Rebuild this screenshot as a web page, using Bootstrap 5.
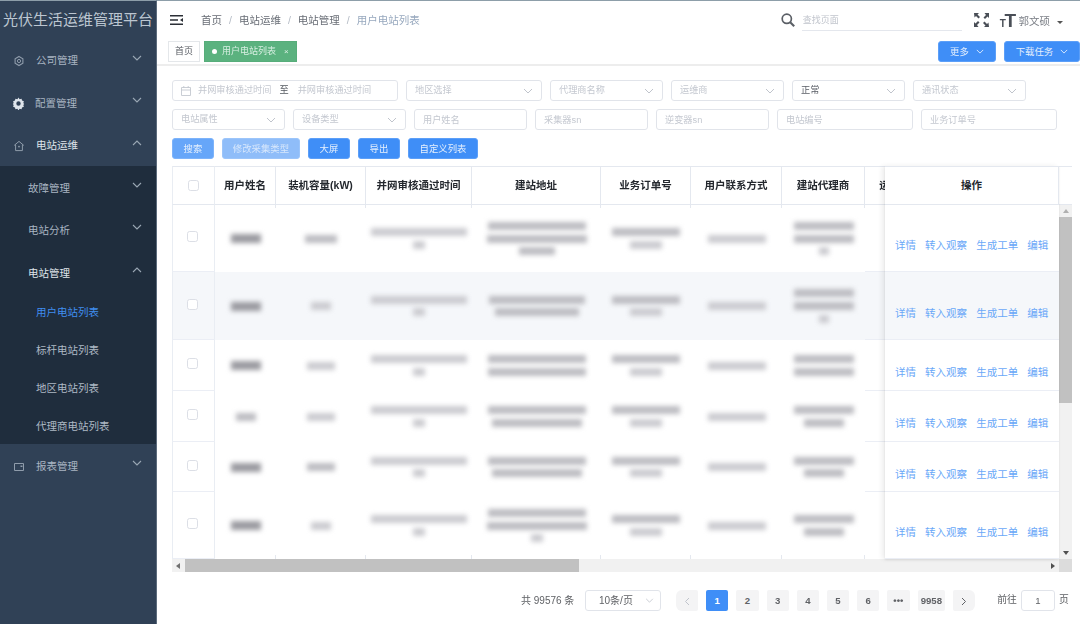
<!DOCTYPE html>
<html lang="zh-CN">
<head>
<meta charset="utf-8">
<title>光伏生活运维管理平台</title>
<link href="https://cdn.jsdelivr.net/npm/bootstrap@5.3.0/dist/css/bootstrap.min.css" rel="stylesheet">
<style>
html,body{height:100%;margin:0;overflow:hidden;background:#fff}
body{font-family:"Liberation Sans","Noto Sans CJK SC",sans-serif;font-size:10.5px;color:#606266}
.app-frame{height:624px;filter:blur(.35px)}
/* sidebar */
.side-rail{width:157px;flex:none;background:#304156;border-right:1px solid #5c6b7c;border-top:1px solid #8d9ea9;color:#aab6c3;overflow:hidden}
.side-title{height:38px;font-size:15px;line-height:38px;padding-left:3px;color:#bcc6d1;white-space:nowrap;letter-spacing:0}
.side-item{height:42.3px;display:flex;align-items:center;font-size:10.5px;position:relative;padding-top:2px;color:#a9b5c2}
.side-item.lvl1{padding-left:13px}
.side-item.lvl2{padding-left:28px;padding-top:4px}
.side-item.lvl3{padding-left:36px;height:37.8px;padding-top:3px;color:#aeb9c5}
.side-item.tail{padding-top:4px}
.side-item.on{color:#dfe4ea}
.side-item.cur{color:#3f8ef0}
.side-sub{background:#1f2d3d}
.side-ico{width:12px;height:12px;margin-right:11px;flex:none;color:#8f9cab}
.side-ico.big{margin-right:10px;margin-left:-1px;width:13px;height:13px;color:#dfe5ec}
.side-chev{position:absolute;left:132px;top:50%;margin-top:-5px;width:10px;height:6px;color:#9aa7b4}
/* header */
.top-strip{height:39px;border-top:1px solid #8d9ea9;padding-left:13px;padding-right:17px}
.burger{width:13px;height:10px;color:#2b2f36;margin-right:18px}
.crumbs{--bs-breadcrumb-margin-bottom:0;--bs-breadcrumb-item-padding-x:7px;--bs-breadcrumb-divider-color:#b4bbc5;font-size:10.5px;padding-top:1px}
.crumbs .breadcrumb-item{color:#686d75}
.crumbs .breadcrumb-item.active{color:#97a8be}
.find-ico{width:14px;height:14px;color:#5b5f66;margin-right:7px}
.find-box{width:160px;height:22px;border:0;border-bottom:1px solid #e4e7ed;border-radius:0;font-size:9px;padding:0 1px;margin-right:12px;color:#606266}
.find-box::placeholder{color:#c0c4cc}
.expand-ico{width:15px;height:14px;color:#4a4f57;margin-right:11px}
.size-ico{font-weight:700;color:#4a4f57;font-size:19px;line-height:1;margin-right:4px;white-space:nowrap;font-family:"Liberation Sans",sans-serif;letter-spacing:-1.500px}
.size-ico span{font-size:10px}
.who{font-size:10.5px;color:#7a7e85;margin-top:4px}
.who-caret{border:3px solid transparent;border-top:3.5px solid #555;border-bottom:0;margin-left:7px;margin-top:5px}
/* tag bar */
.tag-strip{height:27px;border-bottom:2px solid #ededed;padding-left:11px;padding-bottom:1px}
.tab-plain,.tab-live{height:21px;line-height:19px;font-size:9px;border:1px solid #e4e7ea;padding:0 6px;color:#54585f;background:#fff}
.tab-live{background:#5bb27f;border-color:#57ad7a;color:#d8efe2;margin-left:4px;padding:0 7px;display:flex;align-items:center}
.tab-dot{width:5px;height:5px;border-radius:50%;background:#fff;margin-right:5px}
.tab-x{font-size:8px;margin-left:8px}
.btn.act{--bs-btn-bg:#3f8ef7;--bs-btn-border-color:#5c9ff8;--bs-btn-color:#e6f0fd;--bs-btn-padding-x:0;--bs-btn-padding-y:0;--bs-btn-border-radius:3px;--bs-btn-font-size:9.4px;height:21px;line-height:19px}
.btn.act.faded{--bs-btn-bg:#66a6f9;--bs-btn-border-color:#7db3fa}
.btn.act.off{--bs-btn-disabled-bg:#8fbdf9;--bs-btn-disabled-border-color:#9cc5fa;--bs-btn-disabled-color:#d7e7fc;--bs-btn-disabled-opacity:1;background:#8fbdf9;border-color:#9cc5fa;color:#d7e7fc;opacity:1}
.w42{width:42px}.w58{width:58px}.w70{width:70px}.w76{width:76px}.w78{width:78px}
.btn-chev{width:8px;height:5px;margin-left:7px;vertical-align:1px}
/* filters */
.filter-zone{padding:14px 0 0 15px}
.f-row{margin-bottom:8px}
.fld{height:21px;min-height:21px;border:1px solid #e1e4ea;border-radius:3px;font-size:9.2px;padding:0 0 0 8px;color:#606266;box-shadow:none;background-color:#fff}
.fld::placeholder{color:#c4c8d0}
select.fld{background-image:url("data:image/svg+xml,%3csvg xmlns='http://www.w3.org/2000/svg' viewBox='0 0 10 6'%3e%3cpath fill='none' stroke='%23c0c4cc' d='M1 1l4 4 4-4'/%3e%3c/svg%3e");background-size:10px 6px;background-position:right 8px center;color:#c4c8d0}
select.fld.chosen{color:#5a5e66}
.w113{width:113px}.w136{width:136px}.w226{width:226px}
.date-fld{display:flex;align-items:center;color:#c4c8d0}
.date-fld svg{width:10px;height:10px;margin-right:7px;color:#c4c8d0}
.date-fld b{font-weight:400;color:#54585f;margin:0 9px 0 8px}
/* data table */
.grid-shell{position:relative;width:900px;margin:7px 0 0 15px;display:grid;grid-template-columns:887px 13px;grid-template-rows:393px 13px}
.grid-clip{overflow:hidden;position:relative}
.grid-tbl{--bs-table-border-color:#ebeef5;border-collapse:separate;border-spacing:0;table-layout:fixed;width:887px;margin:0;font-size:10.5px}
.cw43{width:43px}.cw61{width:61px}.cw90{width:90px}.cw106{width:106px}.cw129{width:129px}.cw91{width:91px}.cw83{width:83px}.cw133{width:133px}
.grid-tbl th{height:39px;padding:0;vertical-align:middle;text-align:center;font-weight:700;color:#24282e;border-top:1px solid #e4e8ef;border-bottom:1px solid #e4e8ef;border-right:1px solid #e4e8ef;white-space:nowrap;overflow:hidden;position:relative;background:#fff}
.grid-tbl td{padding:0;vertical-align:middle;text-align:center;border:0;background:#fff}
.grid-tbl .lead-cell{border-left:1px solid #e9edf3;border-right:1px solid #e9edf3;border-bottom:1px solid #ebeef5}
.grid-tbl th.lead-cell{border-top:1px solid #e4e8ef;border-bottom:1px solid #e4e8ef}
.grid-tbl .trail-cell{border-bottom:1px solid #ebeef5}
.grid-tbl tr.hov td{background:#f5f7fa}
.grid-tbl tr.h67 td{height:67px}
.grid-tbl tr.h68 td{height:68px}
.grid-tbl tr.h51 td{height:51px}
.grid-tbl tr.h50 td{height:50px}
.grid-tbl tr.tick td:not(.lead-cell):not(.trail-cell),.grid-tbl tr.tick-a td.mid{position:relative}
.grid-tbl tr.tick td:not(.lead-cell):not(.trail-cell)::after{content:"";position:absolute;right:0;bottom:0;width:1px;height:4px;background:#e4e8ef}
.grid-tbl tr.tick-a td.mid::after{content:"";position:absolute;right:0;top:0;width:1px;height:3px;background:#e4e8ef}
.ck{width:11px;height:11px;margin:-3px 0 0;border:1px solid #dcdfe6;border-radius:2px;background-color:#fff;float:none;display:block;margin-left:14px}
.ck.hd{margin:0 0 0 15px;width:11px;height:11px}
.bl{display:block;height:8px;margin:4.75px auto;background:#bcbcc1;filter:blur(2.6px)}
.bl.dk{background:#9a9aa0;height:9px;margin:4.25px auto}
.bl.lt{background:#cbcbd0}
.b10{width:10px}.b12{width:12px}.b20{width:20px}.b24{width:24px}.b28{width:28px}.b31{width:30px}.b34{width:32px}.b36{width:36px}.b40{width:40px}.b60{width:58px}.b62{width:60px}.b70{width:68px}.b84{width:84px}.b90{width:90px}.b98{width:96px}.b100{width:98px}.b102{width:100px}
/* fixed operations column */
.fix-col{position:absolute;left:713px;top:0;width:174px;box-shadow:-3px 0 5px rgba(0,0,0,.07),0 1px 2px rgba(0,0,0,.08);background:#fff;height:393px;overflow:hidden}
.fix-col .grid-tbl{width:174px}
.fix-col td{border-bottom:1px solid #ebeef5;border-right:0}
.ops{display:flex;gap:9.1px;padding:16px 0 0 10px;font-size:10.5px;white-space:nowrap}
.ops a{color:#6aa8f8;text-decoration:none}
.vscroll{background:#f1f1f1;position:relative;display:flex;flex-direction:column}
.vs-head{height:39px;background:#fff;border-top:1px solid #e4e8ef;border-bottom:1px solid #e4e8ef}
.vs-up{height:12px;display:flex;align-items:center;justify-content:center}
.vs-thumb{height:186px;background:#c1c1c1}
.vs-down{margin-top:auto;height:12px;display:flex;align-items:center;justify-content:center}
.hscroll{background:#f1f1f1;display:flex;align-items:center;height:13px}
.hs-thumb{width:394px;height:13px;background:#c1c1c1;margin-left:1px}
.hs-end{margin-left:auto;width:12px;display:flex;justify-content:center}
.hs-start{width:12px;display:flex;justify-content:center}
.sc-corner{background:#dcdcdc}
.tri-u{border:3.5px solid transparent;border-bottom:4px solid #b0b0b0;border-top:0}
.tri-d{border:3.5px solid transparent;border-top:4px solid #505050;border-bottom:0}
.tri-l{border:3.5px solid transparent;border-right:4px solid #707070;border-left:0}
.tri-r{border:3.5px solid transparent;border-left:4px solid #505050;border-right:0}
/* pagination */
.pager-row{padding-top:18px;padding-left:364px;font-size:10px;color:#606266}
.pg-total{width:64px;white-space:nowrap}
.pg-size{width:76px;height:21px;min-height:21px;font-size:10px;color:#606266;padding-left:13px;margin-right:15px}
select.pg-size{color:#606266;background-position:right 6px center;background-size:9px 5px}
.pager-list{--bs-pagination-padding-x:0;--bs-pagination-padding-y:0;--bs-pagination-font-size:9.6px;margin:0;gap:8px}
.pager-list .page-link{width:22.2px;height:21px;line-height:21px;text-align:center;background:#f4f4f5;border:0;border-radius:2px;color:#606266;font-weight:700;margin:0}
.pager-list .page-item:not(:first-child) .page-link{margin-left:0}
.pager-list .wide .page-link{width:27.6px}
.pager-list .active .page-link{background:#3f8ef7;color:#fff;border-radius:2px}
.pager-list .disabled .page-link{color:#c0c4cc;font-weight:400;background:#f4f4f5}
.pager-list .page-link svg{width:6px;height:9px}
.pg-jump{margin-left:22px;white-space:nowrap;font-size:9.8px}
.pg-input{width:34px;height:21px;min-height:21px;font-size:9.6px;padding:0;text-align:center;margin:0 4px 0 4px;color:#606266}
</style>
</head>
<body>
<svg width="0" height="0" class="position-absolute">
  <symbol id="chev" viewBox="0 0 10 6"><path d="M1 1l4 4 4-4" fill="none" stroke="currentColor" stroke-width="1.1"/></symbol>
  <symbol id="chevup" viewBox="0 0 10 6"><path d="M1 5l4-4 4 4" fill="none" stroke="currentColor" stroke-width="1.1"/></symbol>
</svg>
<div class="app-frame d-flex">
  <aside class="side-rail">
    <div class="side-title">光伏生活运维管理平台</div>
    <nav class="d-flex flex-column">
      <div class="side-item lvl1"><svg class="side-ico" viewBox="0 0 12 12"><path d="M6 1.500l3.900 2.200v4.600L6 10.500 2.100 8.300V3.700z" fill="none" stroke="currentColor" stroke-width="1.100"/><circle cx="6" cy="6" r="1.600" fill="none" stroke="currentColor"/></svg>公司管理<svg class="side-chev"><use href="#chev"/></svg></div>
      <div class="side-item lvl1"><svg class="side-ico big" viewBox="0 0 13 13"><path fill-rule="evenodd" fill="currentColor" d="M6.500.5l1.100 1.700 2-.4.4 1.600 1.900.8-.6 1.800.9 1-.9 1 .6 1.800-1.900.8-.4 1.600-2-.4-1.100 1.700-1.100-1.700-2 .4-.4-1.600-1.900-.8.6-1.800-.9-1 .9-1-.6-1.800 1.900-.8.4-1.600 2 .4zM6.500 4.300a2.200 2.200 0 1 0 0 4.400 2.200 2.200 0 0 0 0-4.400z"/></svg>配置管理<svg class="side-chev"><use href="#chev"/></svg></div>
      <div class="side-item lvl1 on"><svg class="side-ico" viewBox="0 0 12 12"><path d="M1.200 5.400L6 1.400l4.800 4M2.600 4.600v6h6.800v-6" fill="none" stroke="currentColor" stroke-width="1"/><circle cx="6" cy="6.600" r=".9" fill="currentColor"/></svg>电站运维<svg class="side-chev"><use href="#chevup"/></svg></div>
      <div class="side-sub d-flex flex-column">
        <div class="side-item lvl2">故障管理<svg class="side-chev"><use href="#chev"/></svg></div>
        <div class="side-item lvl2">电站分析<svg class="side-chev"><use href="#chev"/></svg></div>
        <div class="side-item lvl2 on">电站管理<svg class="side-chev"><use href="#chevup"/></svg></div>
        <div class="side-item lvl3 cur">用户电站列表</div>
        <div class="side-item lvl3">标杆电站列表</div>
        <div class="side-item lvl3">地区电站列表</div>
        <div class="side-item lvl3">代理商电站列表</div>
      </div>
      <div class="side-item lvl1 tail"><svg class="side-ico" viewBox="0 0 12 12"><path d="M1.500 2.500h9v7h-9z" fill="none" stroke="currentColor"/><path d="M7.500 4.500h2v1.500h-2z" fill="currentColor"/></svg>报表管理<svg class="side-chev"><use href="#chev"/></svg></div>
    </nav>
  </aside>
  <main class="flex-grow-1" style="min-width:0">
    <header class="top-strip d-flex align-items-center">
      <svg class="burger flex-none" viewBox="0 0 13 10"><path d="M0 .8h13M0 9.200h13M0 5h8" stroke="currentColor" stroke-width="1.400" fill="none"/><path d="M13 3v4l-3-2z" fill="currentColor"/></svg>
      <ol class="breadcrumb crumbs">
        <li class="breadcrumb-item">首页</li>
        <li class="breadcrumb-item">电站运维</li>
        <li class="breadcrumb-item">电站管理</li>
        <li class="breadcrumb-item active">用户电站列表</li>
      </ol>
      <div class="d-flex align-items-center ms-auto">
        <svg class="find-ico" viewBox="0 0 14 14"><circle cx="5.800" cy="5.800" r="4.600" fill="none" stroke="currentColor" stroke-width="1.700"/><path d="M9.200 9.200l4 4" stroke="currentColor" stroke-width="2.100"/></svg>
        <input class="form-control find-box" placeholder="查找页面">
        <svg class="expand-ico" viewBox="0 0 15 14"><path fill="currentColor" d="M0 0h5L3.500 1.500 6 4 4.500 5.500 2 3 .5 4.500zM15 0v5l-1.500-1.500L11 6 9.500 4.500 12 2 10.500 0zM0 14V9l1.500 1.500L4 8l1.500 1.500L3 12l1.500 2zM15 14h-5l1.500-1.500L9 10l1.500-1.500L13 11l1.500-1.500z"/></svg>
        <div class="size-ico"><span>T</span>T</div>
        <div class="who">郭文硕</div>
        <div class="who-caret"></div>
      </div>
    </header>
    <div class="tag-strip d-flex align-items-center">
      <div class="tab-plain">首页</div>
      <div class="tab-live"><span class="tab-dot"></span>用户电站列表<span class="tab-x">×</span></div>
      <div class="ms-auto d-flex gap-2">
        <button class="btn btn-primary act w58" type="button">更多<svg class="btn-chev"><use href="#chev"/></svg></button>
        <button class="btn btn-primary act w76" type="button">下载任务<svg class="btn-chev"><use href="#chev"/></svg></button>
      </div>
    </div>
    <div class="filter-zone">
      <div class="d-flex gap-2 f-row">
        <div class="form-control fld date-fld w226"><svg viewBox="0 0 10 10"><path d="M.5 1.500h9v8h-9zM.5 4h9M2.800 0v2M7.200 0v2" fill="none" stroke="currentColor" stroke-width=".9"/></svg>并网审核通过时间<b>至</b>并网审核通过时间</div>
        <select class="form-select fld w136"><option>地区选择</option></select>
        <select class="form-select fld w113"><option>代理商名称</option></select>
        <select class="form-select fld w113"><option>运维商</option></select>
        <select class="form-select fld w113 chosen"><option>正常</option></select>
        <select class="form-select fld w113"><option>通讯状态</option></select>
      </div>
      <div class="d-flex gap-2 f-row">
        <select class="form-select fld w113"><option>电站属性</option></select>
        <select class="form-select fld w113"><option>设备类型</option></select>
        <input class="form-control fld w113" placeholder="用户姓名">
        <input class="form-control fld w113" placeholder="采集器sn">
        <input class="form-control fld w113" placeholder="逆变器sn">
        <input class="form-control fld w136" placeholder="电站编号">
        <input class="form-control fld w136" placeholder="业务订单号">
      </div>
      <div class="d-flex gap-2">
        <button class="btn btn-primary act faded w42" type="button">搜索</button>
        <button class="btn btn-primary act off w78" type="button" disabled>修改采集类型</button>
        <button class="btn btn-primary act w42" type="button">大屏</button>
        <button class="btn btn-primary act w42" type="button">导出</button>
        <button class="btn btn-primary act w70" type="button">自定义列表</button>
      </div>
    </div>
    <div class="grid-shell">
      <div class="grid-clip">
        <table class="table grid-tbl">
          <colgroup><col class="cw43"><col class="cw61"><col class="cw90"><col class="cw106"><col class="cw129"><col class="cw90"><col class="cw91"><col class="cw83"><col class="cw61"><col class="cw133"></colgroup>
          <thead><tr>
            <th class="lead-cell"><input class="form-check-input ck hd" type="checkbox"></th>
            <th>用户姓名</th><th>装机容量(kW)</th><th>并网审核通过时间</th><th>建站地址</th><th>业务订单号</th><th>用户联系方式</th><th>建站代理商</th><th>运维商</th><th></th>
          </tr></thead>
          <tbody>
            <tr class="h67 tick-a"><td class="lead-cell"><input class="form-check-input ck" type="checkbox"></td>
              <td class="mid"><i class="bl dk b31"></i></td><td class="mid"><i class="bl b34"></i></td><td class="mid"><i class="bl lt b98"></i><i class="bl lt b12"></i></td><td class="mid"><i class="bl b100"></i><i class="bl b102"></i><i class="bl b36"></i></td><td class="mid"><i class="bl b70"></i><i class="bl lt b34"></i></td><td class="mid"><i class="bl lt b60"></i></td><td class="mid"><i class="bl b62"></i><i class="bl b62"></i><i class="bl lt b10"></i></td><td class="trail-cell"></td><td class="trail-cell"></td></tr>
            <tr class="h68 hov"><td class="lead-cell"><input class="form-check-input ck" type="checkbox"></td>
              <td><i class="bl dk b31"></i></td><td><i class="bl lt b20"></i></td><td><i class="bl lt b98"></i><i class="bl lt b12"></i></td><td><i class="bl b98"></i><i class="bl b84"></i></td><td><i class="bl b70"></i><i class="bl lt b34"></i></td><td><i class="bl lt b60"></i></td><td><i class="bl b62"></i><i class="bl b62"></i><i class="bl lt b10"></i></td><td class="trail-cell"></td><td class="trail-cell"></td></tr>
            <tr class="h51"><td class="lead-cell"><input class="form-check-input ck" type="checkbox"></td>
              <td><i class="bl dk b31"></i></td><td><i class="bl lt b28"></i></td><td><i class="bl lt b98"></i><i class="bl lt b12"></i></td><td><i class="bl b100"></i><i class="bl b100"></i></td><td><i class="bl b70"></i><i class="bl lt b34"></i></td><td><i class="bl lt b60"></i></td><td><i class="bl b62"></i><i class="bl b62"></i></td><td class="trail-cell"></td><td class="trail-cell"></td></tr>
            <tr class="h51"><td class="lead-cell"><input class="form-check-input ck" type="checkbox"></td>
              <td><i class="bl b20"></i></td><td><i class="bl lt b28"></i></td><td><i class="bl lt b98"></i><i class="bl lt b12"></i></td><td><i class="bl b100"></i><i class="bl b90"></i></td><td><i class="bl b70"></i><i class="bl lt b34"></i></td><td><i class="bl lt b60"></i></td><td><i class="bl b62"></i><i class="bl b40"></i></td><td class="trail-cell"></td><td class="trail-cell"></td></tr>
            <tr class="h50"><td class="lead-cell"><input class="form-check-input ck" type="checkbox"></td>
              <td><i class="bl dk b31"></i></td><td><i class="bl b28"></i></td><td><i class="bl lt b98"></i><i class="bl lt b12"></i></td><td><i class="bl b100"></i><i class="bl b90"></i></td><td><i class="bl b70"></i><i class="bl lt b34"></i></td><td><i class="bl lt b60"></i></td><td><i class="bl b62"></i><i class="bl b40"></i></td><td class="trail-cell"></td><td class="trail-cell"></td></tr>
            <tr class="h67 tick"><td class="lead-cell"><input class="form-check-input ck" type="checkbox"></td>
              <td><i class="bl dk b31"></i></td><td><i class="bl lt b20"></i></td><td><i class="bl lt b98"></i><i class="bl lt b12"></i></td><td><i class="bl b100"></i><i class="bl b102"></i><i class="bl lt b12"></i></td><td><i class="bl b70"></i><i class="bl lt b34"></i></td><td><i class="bl lt b60"></i></td><td><i class="bl b62"></i><i class="bl b40"></i></td><td></td><td></td></tr>
          </tbody>
        </table>
      </div>
      <div class="vscroll">
        <div class="vs-head"></div>
        <div class="vs-up"><div class="tri-u"></div></div>
        <div class="vs-thumb"></div>
        <div class="vs-down"><div class="tri-d"></div></div>
      </div>
      <div class="hscroll">
        <div class="hs-start"><div class="tri-l"></div></div>
        <div class="hs-thumb"></div>
        <div class="hs-end"><div class="tri-r"></div></div>
      </div>
      <div class="sc-corner"></div>
      <div class="fix-col">
        <table class="table grid-tbl">
          <thead><tr><th>操作</th></tr></thead>
          <tbody>
            <tr class="h67"><td><div class="ops"><a href="#">详情</a><a href="#">转入观察</a><a href="#">生成工单</a><a href="#">编辑</a></div></td></tr>
            <tr class="h68 hov"><td><div class="ops"><a href="#">详情</a><a href="#">转入观察</a><a href="#">生成工单</a><a href="#">编辑</a></div></td></tr>
            <tr class="h51"><td><div class="ops"><a href="#">详情</a><a href="#">转入观察</a><a href="#">生成工单</a><a href="#">编辑</a></div></td></tr>
            <tr class="h51"><td><div class="ops"><a href="#">详情</a><a href="#">转入观察</a><a href="#">生成工单</a><a href="#">编辑</a></div></td></tr>
            <tr class="h50"><td><div class="ops"><a href="#">详情</a><a href="#">转入观察</a><a href="#">生成工单</a><a href="#">编辑</a></div></td></tr>
            <tr class="h67"><td><div class="ops"><a href="#">详情</a><a href="#">转入观察</a><a href="#">生成工单</a><a href="#">编辑</a></div></td></tr>
          </tbody>
        </table>
      </div>
    </div>
    <div class="pager-row d-flex align-items-center">
      <div class="pg-total">共 99576 条</div>
      <select class="form-select fld pg-size"><option>10条/页</option></select>
      <ul class="pagination pager-list">
        <li class="page-item disabled"><a class="page-link" href="#"><svg viewBox="0 0 6 9"><path d="M5 1L1.500 4.500 5 8" fill="none" stroke="currentColor"/></svg></a></li>
        <li class="page-item active"><a class="page-link" href="#">1</a></li>
        <li class="page-item"><a class="page-link" href="#">2</a></li>
        <li class="page-item"><a class="page-link" href="#">3</a></li>
        <li class="page-item"><a class="page-link" href="#">4</a></li>
        <li class="page-item"><a class="page-link" href="#">5</a></li>
        <li class="page-item"><a class="page-link" href="#">6</a></li>
        <li class="page-item"><a class="page-link" href="#">•••</a></li>
        <li class="page-item wide"><a class="page-link" href="#">9958</a></li>
        <li class="page-item"><a class="page-link" href="#"><svg viewBox="0 0 6 9"><path d="M1 1l3.500 3.500L1 8" fill="none" stroke="currentColor"/></svg></a></li>
      </ul>
      <div class="pg-jump d-flex align-items-center">前往<input class="form-control fld pg-input" value="1">页</div>
    </div>
  </main>
</div>
</body>
</html>
